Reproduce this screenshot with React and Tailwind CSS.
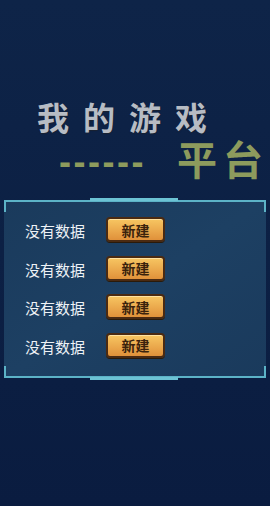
export default function App() {
  const rows = [1, 2, 3, 4];
  const cjk = { fontFamily: '"Noto Sans CJK SC", "Noto Sans", sans-serif' };

  return (
    <div className="w-[270px] h-[506px] overflow-hidden bg-[#0c2046] bg-gradient-to-b from-[#0e2448] to-[#0a1c40]" style={cjk}>
      {/* Title */}
      <div className="pt-[96px] pl-[37px] text-[32px] leading-[40px] tracking-[14px] font-bold text-[#b7bcc4] [text-shadow:0_1px_1px_#1a2230] whitespace-nowrap">
        我的游戏
      </div>
      <div className="flex items-end h-[45px] whitespace-nowrap">
        <span className="ml-[59px] w-[118px] shrink-0 mb-[1px] text-[36px] leading-[36px] font-bold tracking-[2.5px] text-[#8d9b5d] [font-family:'Liberation_Sans',sans-serif]">------</span>
        <span className="shrink-0 text-[40px] leading-[46px] tracking-[6px] font-bold text-[#8d9b5d]">平台</span>
      </div>

      {/* Panel */}
      <div className="relative mt-[19px] mx-[4px] h-[178px] bg-gradient-to-br from-[#1a3a5c] via-[#1d4063] to-[#1a3a5c]">
        {/* frame */}
        <div className="absolute left-0 right-0 top-0 h-[2px] bg-[#5cb3c7]" />
        <div className="absolute left-[86px] w-[88px] top-[-2px] h-[3px] bg-[#6cc3d4]" />
        <div className="absolute left-0 top-0 w-[2px] h-[12px] bg-[#5cb3c7]" />
        <div className="absolute right-0 top-0 w-[2px] h-[12px] bg-[#5cb3c7]" />
        <div className="absolute left-0 right-0 bottom-0 h-[2px] bg-[#5cb3c7]" />
        <div className="absolute left-[86px] w-[88px] bottom-[-2px] h-[3px] bg-[#6cc3d4]" />
        <div className="absolute left-0 bottom-0 w-[2px] h-[12px] bg-[#5cb3c7]" />
        <div className="absolute right-0 bottom-0 w-[2px] h-[12px] bg-[#5cb3c7]" />

        <div className="flex flex-col gap-[13.5px] pt-[17px] pl-[21px]">
          {rows.map((r) => (
            <div key={r} className="flex items-center h-[25px]">
              <span className="w-[81px] text-[15px] leading-[20px] text-[#eef2f6] mt-[3px]">没有数据</span>
              <button className="w-[59px] h-[25px] rounded-[4px] border-2 border-[#4a2a12] bg-gradient-to-b from-[#f7c662] to-[#e0913a] shadow-[inset_0_1px_0_#ffe2a0,0_1px_0_#2a1a0a] text-[14px] leading-[18px] font-bold text-[#3a220c] flex items-center justify-center" style={cjk}>
                新建
              </button>
            </div>
          ))}
        </div>
      </div>
    </div>
  );
}
